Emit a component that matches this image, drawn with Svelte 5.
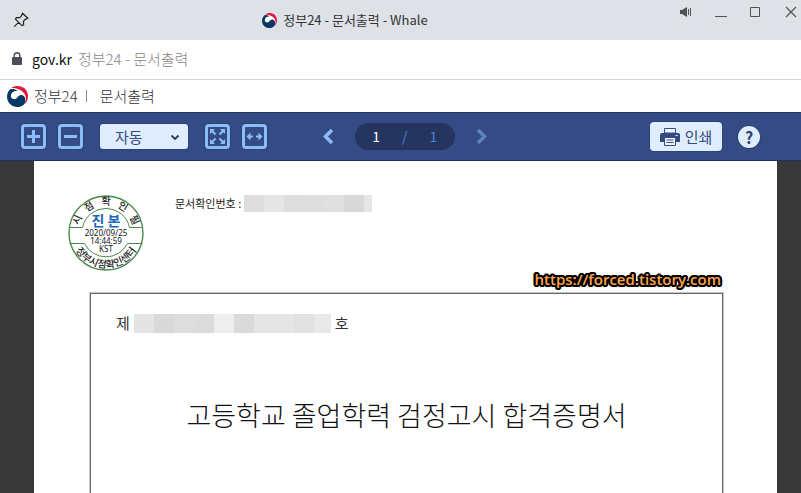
<script>
  let zoom = $state('auto');
  let page = $state('1');
  const docNumber = ['#dedede', '#e6e6e6', '#dddddd', '#dedede', '#e0e0e0', '#d8d8d8', '#e6e6e6'];
  const issueNumber = ['#e4e4e4', '#d9d9d9', '#dddddd', '#dbdbdb', '#eeeeee', '#dadada', '#e5e5e5', '#e5e5e5', '#e1e1e1', '#e9e9e9'];
</script>

{#snippet emblem()}
  <svg class="emblem" viewBox="0 0 24 24" aria-hidden="true">
    <circle cx="12" cy="12" r="12" fill="#fff" />
    <path fill="#e4153f" d="M5 2.3C12-2.6 24 .8 24 12c0 4.200-2 7.300-4.300 9.200 2.600-3.900 2.700-9.500-.4-13.200C15.800 3.800 10.300 2 5 2.300Z" />
    <path fill="#073763" d="M4 3.500C1.500 5.700 0 8.800 0 12.200 0 18.800 5.400 24 11.800 24c5.400 0 9.300-3.300 9.300-7.800 0-3.600-2.300-5.900-5.100-5.800-3.900.1-3.800 5-7.900 4.700C5 14.900 4 12.600 4.600 10c.8-3.300 4.400-4.700 7.600-4.700C9.700 3.700 7 3 4 3.500Z" />
  </svg>
{/snippet}

<div class="window">
  <header class="titlebar">
    <button class="pin" aria-label="고정">
      <svg width="16" height="16" viewBox="0 0 16 16"><path d="M9.500 1.200 14.800 6.200 12 7.600 10.500 9.200 10.600 12.800 8.900 13.600 2.500 7.200 3.300 5.700 6.700 5.600 8.400 3.900ZM5.600 10.400 1.200 14.600" fill="none" stroke="#222" stroke-width="1.200" /></svg>
    </button>
    <div class="caption">{@render emblem()}<span>정부24 - 문서출력 - Whale</span></div>
    <div class="controls">
      <button aria-label="소리"><svg width="12" height="12" viewBox="0 0 12 12"><path d="M0 4h2l5-3v10L2 8H0Z" fill="#505255" /><path d="M8.500 3v6M10.500 2v8" stroke="#505255" /></svg></button>
      <button aria-label="최소화"><svg width="12" height="12" viewBox="0 0 12 12"><path d="M0 10.500h12" stroke="#505255" /></svg></button>
      <button aria-label="최대화"><svg width="12" height="12" viewBox="0 0 12 12"><path d="M.5 1.500h9v9h-9Z" fill="none" stroke="#505255" /></svg></button>
      <button aria-label="닫기"><svg width="12" height="12" viewBox="0 0 12 12"><path d="M1 1l10 10M11 1 1 11" stroke="#505255" stroke-width="1.200" /></svg></button>
    </div>
  </header>

  <div class="address">
    <svg width="10" height="13" viewBox="0 0 10 13" aria-hidden="true"><path d="M2.200 6V3.500a2.800 2.800 0 0 1 5.600 0V6" fill="none" stroke="#4a4e57" stroke-width="1.400" /><rect y="5" width="10" height="8" rx="1" fill="#4a4e57" /></svg>
    <span class="host">gov.kr</span><span class="doc">정부24 - 문서출력</span>
  </div>

  <div class="site">
    {@render emblem()}<span>정부24</span><i></i><span>문서출력</span>
  </div>

  <nav class="toolbar">
    <div class="group">
      <button class="tool" aria-label="확대"><svg width="25" height="25" viewBox="0 0 25 25"><rect class="frame" x="1.500" y="1.500" width="22" height="22" rx="2.500" /><path class="line" d="M6 12.500h13M12.500 6v13" /></svg></button>
      <button class="tool" aria-label="축소"><svg width="25" height="25" viewBox="0 0 25 25"><rect class="frame" x="1.500" y="1.500" width="22" height="22" rx="2.500" /><path class="line" d="M6 12.500h13" /></svg></button>
      <div class="select">
        <select aria-label="배율" bind:value={zoom}><option value="auto">자동</option><option value="100">100%</option></select>
        <svg width="10" height="7" viewBox="0 0 10 7" aria-hidden="true"><path d="M1.500 1.500 5 5l3.500-3.500" fill="none" stroke="#1f3d6d" stroke-width="1.800" /></svg>
      </div>
      <button class="tool" aria-label="전체 화면"><svg width="25" height="25" viewBox="0 0 25 25"><rect class="frame" x="1.500" y="1.500" width="22" height="22" rx="2.500" /><path class="thin" d="m7 7 3.500 3.500M18 7l-3.500 3.500M7 18l3.500-3.500M18 18l-3.500-3.500" /><path class="fill" d="M5 5h5l-5 5ZM20 5h-5l5 5ZM5 20h5l-5-5ZM20 20h-5l5-5Z" /></svg></button>
      <button class="tool" aria-label="너비 맞춤"><svg width="25" height="25" viewBox="0 0 25 25"><rect class="frame" x="1.500" y="1.500" width="22" height="22" rx="2.500" /><path class="thin" d="M6 12.500h5M14 12.500h5" /><path class="fill" d="M4.500 12.500 8.500 8.500v8ZM20.500 12.500 16.500 8.500v8Z" /></svg></button>
    </div>
    <div class="pager">
      <button aria-label="이전"><svg width="12" height="17" viewBox="0 0 12 17"><path d="M10 2 3.500 8.500 10 15" fill="none" stroke="#8dbdf8" stroke-width="3.500" /></svg></button>
      <div class="pages"><input aria-label="쪽" bind:value={page} /><span>/</span><span>1</span></div>
      <button aria-label="다음"><svg width="12" height="17" viewBox="0 0 12 17"><path d="M2 2l6.500 6.500L2 15" fill="none" stroke="#5f83bf" stroke-width="3.500" /></svg></button>
    </div>
    <div class="actions">
      <button class="print"><svg width="20" height="18" viewBox="0 0 20 18" aria-hidden="true"><path d="M2 5h16a2 2 0 0 1 2 2v7H0V7a2 2 0 0 1 2-2Z" fill="#324a80" /><path d="M4.500.5h11V5h-11Z" fill="#edf4ff" stroke="#324a80" /><path d="M4.500 9.500h11v8h-11Z" fill="#edf4ff" stroke="#324a80" /><path d="M6.500 12h7M6.500 14.500h7" stroke="#324a80" /><path d="M15.500 7.500h2" stroke="#edf4ff" /></svg>인쇄</button>
      <button class="help" aria-label="도움말">?</button>
    </div>
  </nav>

  <main>
    <article>
      <div class="top">
        <svg class="seal" width="76" height="78" viewBox="1 0 76 78">
          <defs><path id="seal-top" d="M11 39a28 28 0 0 1 56 0" /><path id="seal-bottom" d="M4 39a35 35 0 0 0 70 0" /></defs>
          <g fill="none" stroke="#4b8a4b"><circle cx="39" cy="39" r="37" stroke-width="1.400" /><path d="M2.500 33.500h13a24 24 0 0 1 47 0h13M2.500 49.500h15a24 24 0 0 0 43 0h15" /></g>
          <text class="ring" text-anchor="middle"><textPath href="#seal-top" startOffset="50%">시&nbsp;&nbsp; 점&nbsp;&nbsp; 확&nbsp;&nbsp; 인&nbsp;&nbsp; 필</textPath></text>
          <text class="ring" text-anchor="middle"><textPath href="#seal-bottom" startOffset="50%">정부시점확인센터</textPath></text>
          <g text-anchor="middle"><text class="genuine" x="39" y="32">진 본</text><g class="stamp"><text x="39" y="42">2020/09/25</text><text x="39" y="50">14:44:59</text><text x="39" y="58">KST</text></g></g>
        </svg>
        <div class="number"><span>문서확인번호 :</span><div class="mask">{#each docNumber as color, i}<b class:last={i === 6} style:background={color}></b>{/each}</div></div>
      </div>
      <a class="watermark" href="https://forced.tistory.com">https://forced.tistory.com</a>
      <section>
        <div class="issue"><span>제</span><div class="mask tall">{#each issueNumber as color, i}<b class:end={i === 9} style:background={color}></b>{/each}</div><span>호</span></div>
        <h1>고등학교 졸업학력 검정고시 합격증명서</h1>
      </section>
    </article>
  </main>
</div>

<style>
  :global(body) { margin: 0; background: #383838; }
  * { box-sizing: border-box; }
  .window { display: flex; flex-direction: column; height: 100vh; overflow: hidden; font-family: "Noto Sans CJK KR", sans-serif; color: #333; }
  button { padding: 0; border: 0; background: none; font: inherit; color: inherit; }
  svg { display: block; flex: none; }
  .titlebar { display: grid; grid-template-columns: 2fr auto 3fr; align-items: center; height: 40px; flex: none; padding: 0 4px 0 13px; background: #dee1e6; }
  .pin { justify-self: start; }
  .caption { display: flex; align-items: center; gap: 6px; padding-left: 3px; font-size: 13px; line-height: 20px; }
  .emblem { width: 15px; height: 15px; }
  .controls { display: flex; justify-self: end; align-self: start; gap: 23px; padding-top: 6px; }
  .address { display: flex; align-items: center; height: 40px; flex: none; padding: 0 12px 2px; background: #fff; border-bottom: 1px solid #d4d4d4; font-size: 15px; line-height: 20px; }
  .host { margin-left: 10px; font-size: 14px; color: #111; }
  .doc { margin-left: 6px; color: #8a8480; font-weight: 300; }
  .site { display: flex; align-items: center; height: 32px; flex: none; padding: 0 7px; background: #fff; font-size: 15px; line-height: 20px; font-weight: 300; }
  .site .emblem { width: 21px; height: 21px; margin-right: 6px; }
  .site i { width: 1px; height: 12px; margin: 0 13px 0 8px; background: #888; }
  .toolbar { display: grid; grid-template-columns: 21fr auto 19fr; align-items: center; height: 49px; flex: none; padding: 0 41px 0 21px; background: #354b85; border-top: 1px solid #223760; border-bottom: 1px solid #1d335f; }
  .group { display: flex; align-items: center; gap: 12px; }
  .tool { border-radius: 4px; box-shadow: 0 0 0 1px #284576; }
  .frame { fill: none; stroke: #8dbdf8; stroke-width: 3; }
  .line { stroke: #8dbdf8; stroke-width: 3; }
  .thin { stroke: #8dbdf8; stroke-width: 2; }
  .fill { fill: #8dbdf8; }
  .select { position: relative; margin: 0 5px; }
  select { display: block; appearance: none; width: 88px; height: 25px; padding: 0 24px 0 15px; border: 0; border-radius: 3px; background: #e0edff; color: #344b86; font: 15px/25px "Noto Sans CJK KR", sans-serif; box-shadow: 0 0 0 1px #284576; }
  .select svg { position: absolute; right: 8px; top: 10px; pointer-events: none; }
  .pager { display: flex; align-items: center; gap: 21px; }
  .pages { display: grid; grid-template-columns: 1fr 1fr 1fr; width: 100px; height: 27px; padding: 0 7px; border-radius: 14px; background: #25355f; font-size: 14px; line-height: 27px; text-align: center; color: #4584d4; }
  input { width: 100%; min-width: 0; height: 27px; padding: 0; border: 0; background: none; color: #fff; font: inherit; text-align: center; }
  .actions { display: flex; justify-content: flex-end; align-items: center; gap: 16px; }
  .print { display: flex; align-items: center; justify-content: center; gap: 5px; width: 72px; height: 29px; border-radius: 4px; background: #e0edff; color: #324a80; font-size: 15px; line-height: 20px; box-shadow: 0 0 0 1px #284576; }
  .help { width: 22px; height: 22px; border-radius: 50%; background: #e0edff; color: #29436f; font-size: 16px; line-height: 22px; font-weight: 700; box-shadow: 0 0 0 1px #284576; }
  main { flex: 1; min-height: 0; padding: 0 24px 0 34px; background: #383838; }
  article { display: flex; flex-direction: column; height: 100%; padding: 33px 54px 0 34px; background: #fff; }
  .top { display: flex; align-items: flex-start; gap: 31px; }
  .number { display: flex; align-items: center; gap: 3px; font-size: 11px; line-height: 18px; color: #222; }
  .mask { display: flex; height: 17px; }
  .mask b { width: 20px; }
  .mask .last { width: 8px; }
  .tall { height: 19px; }
  .mask .end { width: 17px; }
  .ring { font-size: 10px; font-weight: 500; fill: #222; }
  .genuine { font-size: 14px; font-weight: 700; fill: #1b66b8; }
  .stamp { font-family: "Noto Sans", sans-serif; font-size: 8px; fill: #111; }
  .watermark { align-self: flex-end; margin-top: -3px; padding-right: 2px; font: 600 15px/20px "Open Sans", sans-serif; color: #ffa54f; text-decoration: none; text-shadow: 2px 0 #000, -2px 0 #000, 0 2px #000, 0 -2px #000, 2px 1px #000, -2px 1px #000, 2px -1px #000, -2px -1px #000, 1px 2px #000, -1px 2px #000, 1px -2px #000, -1px -2px #000; }
  section { flex: 1; margin: 4px 0 0 22px; padding: 19px 25px; border: 1px solid #666; border-width: 1px 1px 0; box-shadow: 0 0 0 1px #c4c4c4; }
  .issue { display: flex; align-items: center; gap: 4px; font-size: 15px; line-height: 20px; }
  h1 { margin: 62px 0 0; font-size: 27px; line-height: 40px; font-weight: 300; color: #111; text-align: center; }
</style>
